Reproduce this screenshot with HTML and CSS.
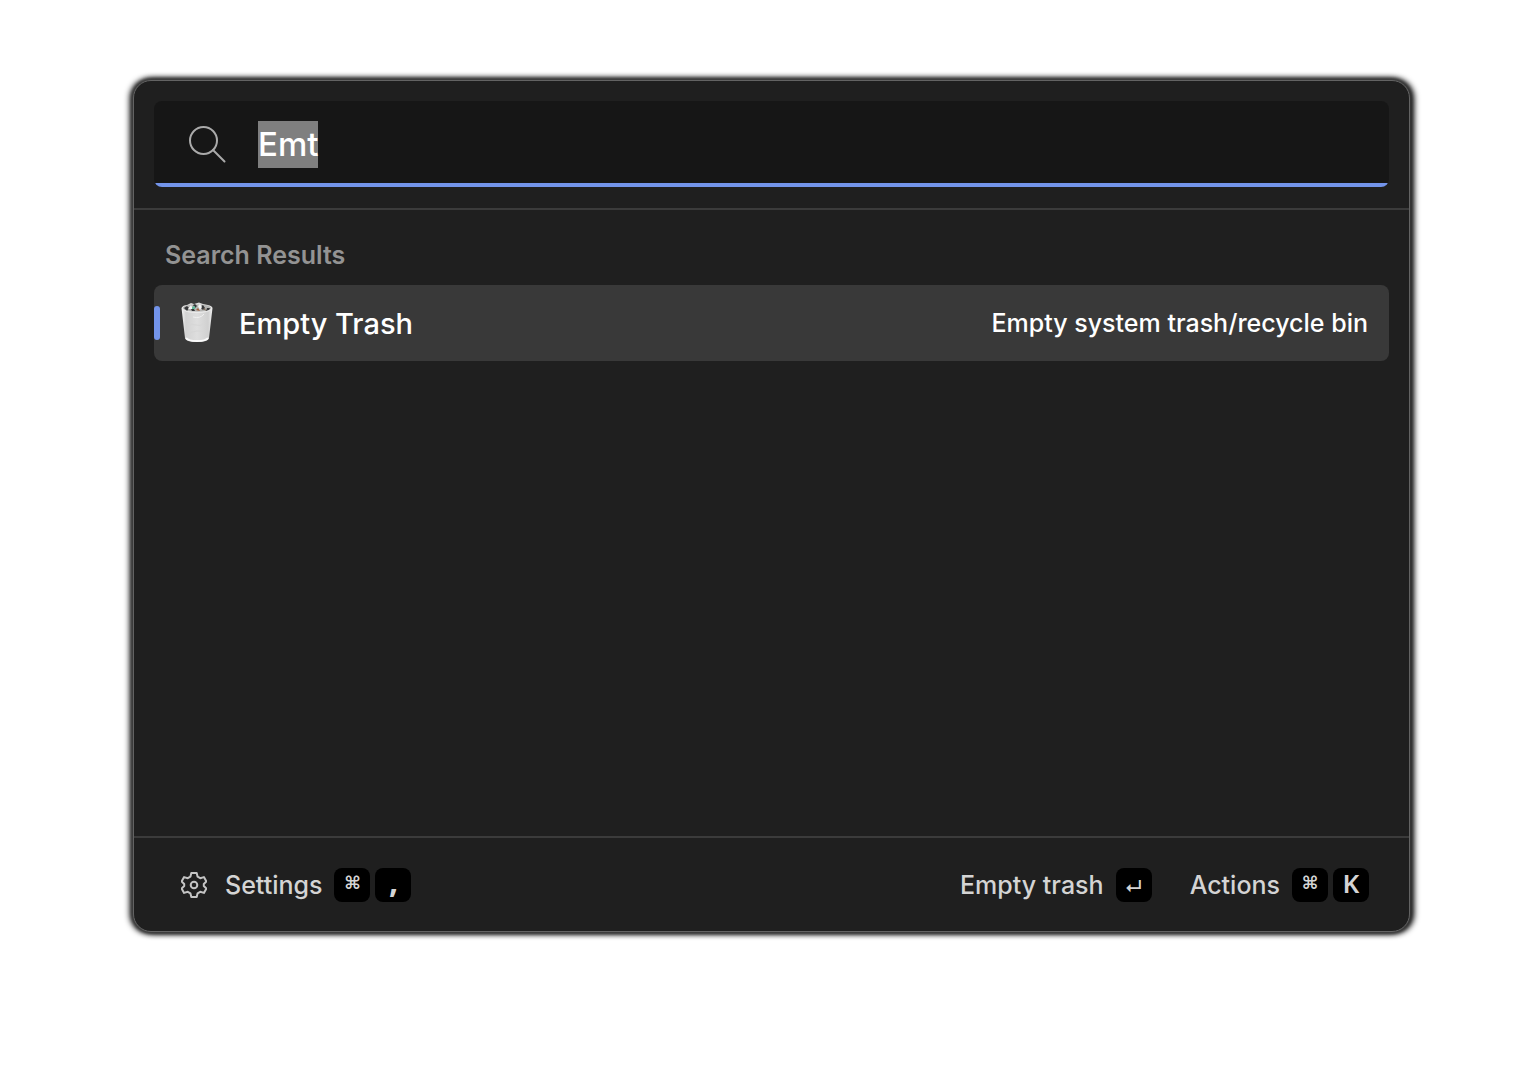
FILE: index.html
```html
<!DOCTYPE html>
<html lang="en">
<head>
<meta charset="utf-8">
<title>Launcher</title>
<link rel="stylesheet" href="styles.css">
</head>
<body>
<main class="launcher">
  <header class="search">
    <label class="search-field">
      <svg class="search-icon" viewBox="0 0 38 38" aria-hidden="true"><circle cx="15.500" cy="15.500" r="13.500"/><path d="M25 25L36.500 36.500"/></svg>
      <input class="search-input" type="text" value="Emt" aria-label="Search" spellcheck="false" autocomplete="off" autofocus>
    </label>
  </header>
  <section class="results">
    <h2 class="results-title">Search Results</h2>
    <button class="result" type="button">
      <svg class="trash-icon" viewBox="0 0 32 42" aria-hidden="true">
        <defs>
          <linearGradient id="bin" x1="0" x2="1" y1="0" y2="0">
            <stop offset="0" stop-color="#f2f2f2"/><stop offset=".14" stop-color="#d2d2d2"/><stop offset=".5" stop-color="#dedede"/><stop offset=".86" stop-color="#d0d0d0"/><stop offset="1" stop-color="#f0f0f0"/>
          </linearGradient>
        </defs>
        <path d="M.5 6Q2 3 6 3L10 1l3 1 5-1.500 4 1.500 5 1q4 1 4.500 3L28 36q-.5 4-12 4T4 36z" fill="url(#bin)"/>
        <ellipse cx="16" cy="6" rx="14" ry="3.500" fill="#b4b4b2"/>
        <path d="M3 6l3-2 2 2-2 3zM12 3l2-1 2 2-2 2zM10 7l3 0 1 2-3 0zM19 5l3-2 2 3-2 2zM26 6l3 0-1 2-3 1z" fill="#353638"/>
        <path d="M7 7l3-4 2 4zM17 4l2-2 2 3-2 3z" fill="#f5f5f5"/>
        <path d="M11 5l3-1 0 3-3 0z" fill="#62b89a"/><path d="M15 8l2-2 2 3z" fill="#a05f3d"/><path d="M22 7l2-1 1 3z" fill="#7f6a58"/>
        <path d="M1 7Q5 10.500 16 10.500T31 7" fill="none" stroke="#ebebeb" stroke-width="1"/>
        <path d="M12 15q7 2 11-3" fill="none" stroke="#f0f0f0" stroke-width="1"/>
        <path d="M7 24q4-3 8-1t9-2M8 31q8-3 15-2" fill="none" stroke="#d6d6d6" stroke-width="1"/>
        <path d="M5 36q2 3 11 3t11-3" fill="none" stroke="#fafafa" stroke-width="2"/>
      </svg>
      <span class="result-name">Empty Trash</span>
      <span class="result-detail">Empty system trash/recycle bin</span>
    </button>
  </section>
  <footer class="actions">
    <button class="action" type="button">
      <svg class="gear-icon" viewBox="0 0 26 26" aria-hidden="true"><path d="M10.300 1h5.400l.9 3.700 2.600 1.500 3.700-1.100 2.500 4.400-2.600 2.500v2l2.600 2.500-2.500 4.400-3.700-1.100-2.600 1.500-.9 3.700h-5.400l-.9-3.700-2.600-1.500-3.700 1.100-2.500-4.400L3.200 14v-2L.6 9.500l2.500-4.400 3.700 1.100 2.600-1.500z"/><circle cx="13" cy="13" r="3.300"/></svg>
      <span class="action-name">Settings</span>
      <span class="keys"><kbd class="key symbol">⌘</kbd><kbd class="key comma">,</kbd></span>
    </button>
    <div class="action-group">
      <button class="action" type="button">
        <span class="action-name">Empty trash</span>
        <span class="keys"><kbd class="key enter">↵</kbd></span>
      </button>
      <button class="action" type="button">
        <span class="action-name">Actions</span>
        <span class="keys"><kbd class="key symbol">⌘</kbd><kbd class="key">K</kbd></span>
      </button>
    </div>
  </footer>
</main>
<script src="launcher.js"></script>
</body>
</html>
```
FILE: styles.css
```css
* { box-sizing: border-box; }

body {
  display: flex;
  min-height: 100vh;
  margin: 0;
  padding: 80px 130px 136px 133px;
  background: #fff;
  color: #fff;
  font-family: Inter, "Liberation Sans", sans-serif;
}

button, input { font: inherit; color: inherit; }

button {
  border: 0;
  background: none;
  cursor: pointer;
}

.launcher {
  flex: 1;
  display: flex;
  flex-direction: column;
  min-width: 0;
  border: 1px solid #636363;
  border-radius: 18px;
  background: #1f1f1f;
  box-shadow: 0 0 3px 1px #444, 3px 0 6px 1px #000, -2px 0 6px 1px #000;
}

.search {
  padding: 20px 20px 21px;
  border-bottom: 2px solid #3b3b3b;
}

.search-field {
  display: flex;
  align-items: center;
  gap: 32px;
  height: 86px;
  padding: 0 34px;
  border-radius: 8px;
  background: linear-gradient(#7394ea, #7394ea) bottom / 100% 4px no-repeat #161616;
}

.search-icon {
  flex: none;
  width: 38px;
  height: 38px;
  fill: none;
  stroke: #aaa;
  stroke-width: 2;
  stroke-linecap: round;
}

.search-input {
  flex: 1;
  min-width: 0;
  height: 47px;
  padding: 0;
  border: 0;
  outline: 0;
  background: none;
  font-size: 33px;
  font-weight: 500;
  line-height: 47px;
}

.search-input::selection {
  background: rgba(129, 129, 129, .99);
  color: #fff;
}

.results {
  flex: 1;
  padding: 29px 20px;
}

.results-title {
  margin: 0 0 14px;
  padding-left: 11px;
  color: #939393;
  font-size: 25px;
  font-weight: 600;
  line-height: 32px;
}

.result {
  display: flex;
  align-items: center;
  width: 100%;
  height: 76px;
  padding: 0 21px 0 0;
  border-radius: 8px;
  background: #393939;
  text-align: left;
}

.result::before {
  content: "";
  width: 6px;
  height: 34px;
  border-radius: 3px;
  background: #7394ea;
}

.trash-icon {
  width: 32px;
  height: 42px;
  margin: 0 26px 0 21px;
}

.result-name {
  flex: 1;
  font-size: 29px;
  font-weight: 500;
}

.result-detail {
  font-size: 25px;
  font-weight: 500;
}

.actions {
  display: flex;
  align-items: center;
  justify-content: space-between;
  height: 95px;
  padding: 0 40px 0 47px;
  border-top: 2px solid #3b3b3b;
  color: #d4d4d4;
}

.action-group {
  display: flex;
  gap: 38px;
}

.action {
  display: flex;
  align-items: center;
  gap: 12px;
  padding: 0;
  font-size: 25px;
  font-weight: 500;
}

.gear-icon {
  width: 26px;
  height: 26px;
  margin-right: 6px;
  fill: none;
  stroke: #c4c4c4;
  stroke-width: 2;
  stroke-linejoin: round;
}

.keys {
  display: flex;
  gap: 5px;
}

.key {
  display: flex;
  align-items: center;
  justify-content: center;
  width: 36px;
  height: 34px;
  padding-bottom: 4px;
  border-radius: 8px;
  background: #000;
  font-family: "Noto Sans", sans-serif;
  font-size: 26px;
  font-weight: 600;
  line-height: 34px;
}

.comma {
  padding-bottom: 8px;
  font-size: 32px;
  font-weight: 700;
}

.symbol,
.enter {
  font-family: Inter, "DejaVu Sans", sans-serif;
  font-size: 18px;
}

.enter { padding: 6px 0 0; }
```
FILE: launcher.js
```js
document.querySelector(".search-input").select();
```
